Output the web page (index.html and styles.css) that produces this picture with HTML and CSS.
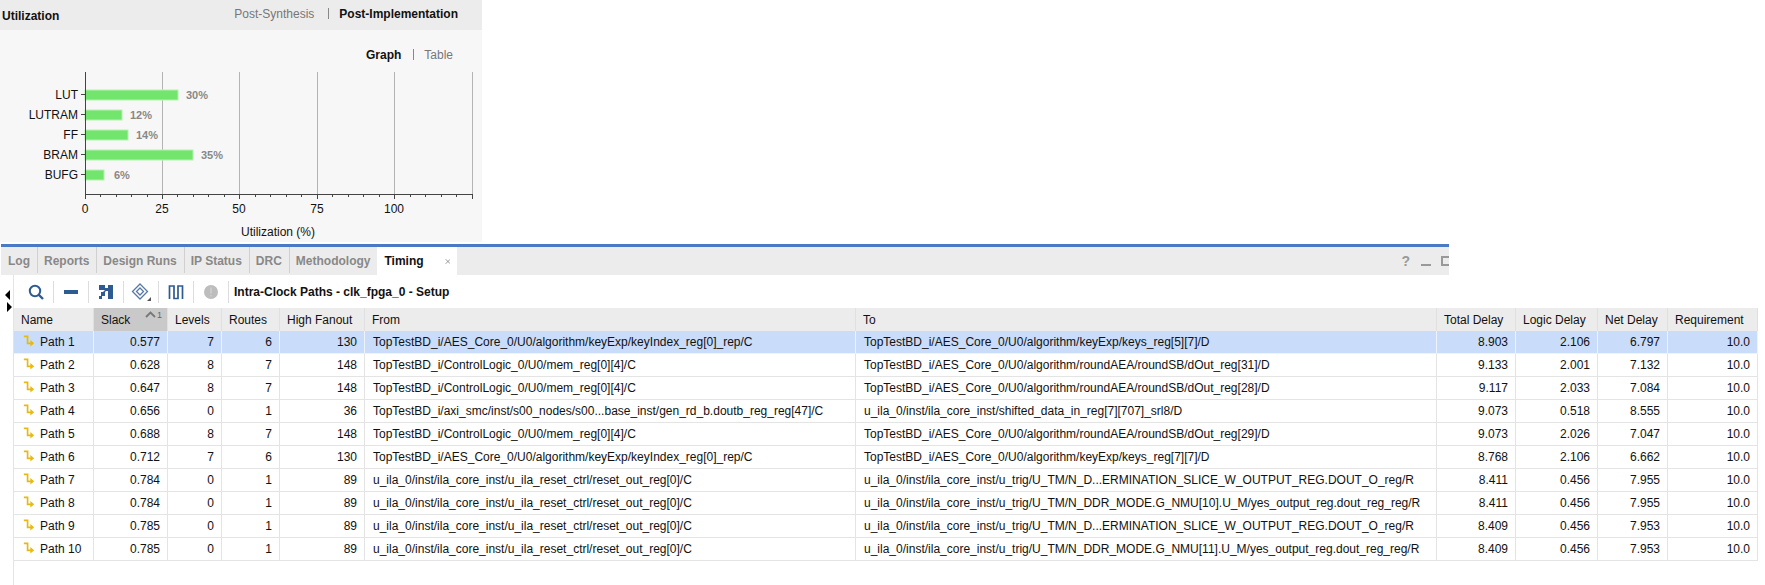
FILE: index.html
```html
<!DOCTYPE html>
<html lang="en">
<head>
<meta charset="utf-8">
<title>Timing</title>
<link rel="stylesheet" href="styles.css">
</head>
<body>
<svg class="defs" width="0" height="0"><symbol id="path-ic" viewBox="0 0 14 14"><path d="M2 1.5h4v7.5h6" fill="none" stroke="#e8b90e" stroke-width="1.8"/><path d="M9 5.5l4 3.5-4 3.5z" fill="#e8b90e"/></symbol></svg>
<section class="util">
  <header class="util-head">
    <h2 class="util-title">Utilization</h2>
    <nav class="switch switch-top"><span class="off">Post-Synthesis</span><i class="bar"></i><b>Post-Implementation</b></nav>
  </header>
  <div class="util-body">
    <nav class="switch switch-sub"><b>Graph</b><i class="bar"></i><span class="off">Table</span></nav>
    <svg class="chart" width="482" height="180" viewBox="0 0 482 180">
      <g class="grid">
        <path d="M162.5 6v122M239.5 6v122M317.5 6v122M394.5 6v122M472.5 6v122"/>
      </g>
      <g class="bars">
        <rect x="85" y="24" width="93" height="10"/>
        <rect x="85" y="44" width="37" height="10"/>
        <rect x="85" y="64" width="43" height="10"/>
        <rect x="85" y="84" width="108" height="10"/>
        <rect x="85" y="104" width="19" height="10"/>
      </g>
      <path class="axis" d="M85.500 6V128M85 128.500H473M85.500 128v5M162.500 128v5M239.500 128v5M317.500 128v5M394.500 128v5M472.500 128v5M81 28.500h4M81 48.500h4M81 68.500h4M81 88.500h4M81 108.500h4"/>
      <path class="axis minor" d="M100.500 128v3M116.500 128v3M131.500 128v3M147.500 128v3M177.500 128v3M193.500 128v3M208.500 128v3M224.500 128v3M255.500 128v3M270.500 128v3M286.500 128v3M301.500 128v3M332.500 128v3M348.500 128v3M363.500 128v3M379.500 128v3M410.500 128v3M425.500 128v3M441.500 128v3M456.500 128v3"/>
      <g class="cat">
        <text x="78" y="33">LUT</text><text x="78" y="53">LUTRAM</text><text x="78" y="73">FF</text><text x="78" y="93">BRAM</text><text x="78" y="113">BUFG</text>
      </g>
      <g class="pct">
        <text x="186" y="33">30%</text><text x="130" y="53">12%</text><text x="136" y="73">14%</text><text x="201" y="93">35%</text><text x="114" y="113">6%</text>
      </g>
      <g class="tick">
        <text x="85" y="147">0</text><text x="162" y="147">25</text><text x="239" y="147">50</text><text x="317" y="147">75</text><text x="394" y="147">100</text>
      </g>
      <text class="tick" x="278" y="170">Utilization (%)</text>
    </svg>
  </div>
</section>

<section class="timing">
  <div class="tabs">
    <span class="tab">Log</span><span class="tab">Reports</span><span class="tab">Design Runs</span><span class="tab">IP Status</span><span class="tab">DRC</span><span class="tab">Methodology</span>
    <span class="tab active">Timing<svg class="close" width="9" height="9" viewBox="0 0 9 9"><path d="M1 1l7 7M8 1l-7 7"/></svg></span>
    <div class="win"><span class="help">?</span><i class="min"></i><i class="max"></i></div>
  </div>
  <div class="work">
    <div class="rail">
      <svg width="8" height="36" viewBox="0 0 8 36"><path d="M6 9v10L1 14zM3 21l5 5-5 5z" fill="#000"/></svg>
    </div>
    <div class="main">
      <div class="toolbar">
        <button class="tb"><svg width="18" height="18" viewBox="0 0 18 18"><circle cx="8" cy="8" r="5.200" fill="none" stroke="#2f5b93" stroke-width="2"/><path d="M11.500 11.500l4.500 4.500" stroke="#2f5b93" stroke-width="2.400"/></svg></button>
        <button class="tb"><svg width="16" height="18" viewBox="0 0 16 18"><rect x="1" y="7" width="14" height="4" fill="#2f5b93"/></svg></button>
        <button class="tb"><svg width="16" height="18" viewBox="0 0 16 18"><path d="M1 2h6v3h3V2h5v14h-5V8H8l-1 1v4H4v3H1v-3h2V9h2l2-2H1z" fill="#2f5b93"/></svg></button>
        <button class="tb"><svg width="22" height="20" viewBox="0 0 22 20"><path d="M10 2l7.500 7.500L10 17l-7.500-7.500z" fill="none" stroke="#5578a8" stroke-width="1.300"/><path d="M10 6l3.500 3.500L10 13 6.500 9.500z" fill="none" stroke="#5578a8" stroke-width="1.300"/><path d="M21 15v4h-4z" fill="#555"/></svg></button>
        <button class="tb"><svg width="16" height="18" viewBox="0 0 16 18"><path d="M1.500 16V3h4.500v12.500h4V3h4.500v13" fill="none" stroke="#2f5b93" stroke-width="1.700"/></svg></button>
        <button class="tb"><svg width="16" height="16" viewBox="0 0 16 16"><circle cx="8" cy="8" r="7" fill="#bdbdbd"/><path d="M8 3.500v6M8 11v1.500" stroke="#cfcfcf" stroke-width="1.600"/></svg></button>
        <h3 class="tb-title">Intra-Clock Paths - clk_fpga_0 - Setup</h3>
      </div>
      <table class="paths">
        <colgroup><col class="c1"><col class="c2"><col class="c3"><col class="c4"><col class="c5"><col class="c6"><col class="c7"><col class="c8"><col class="c9"><col class="c10"><col class="c11"></colgroup>
        <thead><tr><th>Name</th><th class="sorted">Slack<span class="sort"><svg width="11" height="7" viewBox="0 0 11 7"><path d="M1 6l4.500-4.500L10 6" fill="none" stroke="#777" stroke-width="1.800"/></svg><sup>1</sup></span></th><th>Levels</th><th>Routes</th><th>High Fanout</th><th>From</th><th>To</th><th>Total Delay</th><th>Logic Delay</th><th>Net Delay</th><th>Requirement</th></tr></thead>
        <tbody>
<tr class="sel"><td class="nm"><svg class="pi"><use href="#path-ic"/></svg>Path 1</td><td class="n">0.577</td><td class="n">7</td><td class="n">6</td><td class="n">130</td><td>TopTestBD_i/AES_Core_0/U0/algorithm/keyExp/keyIndex_reg[0]_rep/C</td><td>TopTestBD_i/AES_Core_0/U0/algorithm/keyExp/keys_reg[5][7]/D</td><td class="n">8.903</td><td class="n">2.106</td><td class="n">6.797</td><td class="n">10.0</td></tr>
<tr><td class="nm"><svg class="pi"><use href="#path-ic"/></svg>Path 2</td><td class="n">0.628</td><td class="n">8</td><td class="n">7</td><td class="n">148</td><td>TopTestBD_i/ControlLogic_0/U0/mem_reg[0][4]/C</td><td>TopTestBD_i/AES_Core_0/U0/algorithm/roundAEA/roundSB/dOut_reg[31]/D</td><td class="n">9.133</td><td class="n">2.001</td><td class="n">7.132</td><td class="n">10.0</td></tr>
<tr><td class="nm"><svg class="pi"><use href="#path-ic"/></svg>Path 3</td><td class="n">0.647</td><td class="n">8</td><td class="n">7</td><td class="n">148</td><td>TopTestBD_i/ControlLogic_0/U0/mem_reg[0][4]/C</td><td>TopTestBD_i/AES_Core_0/U0/algorithm/roundAEA/roundSB/dOut_reg[28]/D</td><td class="n">9.117</td><td class="n">2.033</td><td class="n">7.084</td><td class="n">10.0</td></tr>
<tr><td class="nm"><svg class="pi"><use href="#path-ic"/></svg>Path 4</td><td class="n">0.656</td><td class="n">0</td><td class="n">1</td><td class="n">36</td><td>TopTestBD_i/axi_smc/inst/s00_nodes/s00...base_inst/gen_rd_b.doutb_reg_reg[47]/C</td><td>u_ila_0/inst/ila_core_inst/shifted_data_in_reg[7][707]_srl8/D</td><td class="n">9.073</td><td class="n">0.518</td><td class="n">8.555</td><td class="n">10.0</td></tr>
<tr><td class="nm"><svg class="pi"><use href="#path-ic"/></svg>Path 5</td><td class="n">0.688</td><td class="n">8</td><td class="n">7</td><td class="n">148</td><td>TopTestBD_i/ControlLogic_0/U0/mem_reg[0][4]/C</td><td>TopTestBD_i/AES_Core_0/U0/algorithm/roundAEA/roundSB/dOut_reg[29]/D</td><td class="n">9.073</td><td class="n">2.026</td><td class="n">7.047</td><td class="n">10.0</td></tr>
<tr><td class="nm"><svg class="pi"><use href="#path-ic"/></svg>Path 6</td><td class="n">0.712</td><td class="n">7</td><td class="n">6</td><td class="n">130</td><td>TopTestBD_i/AES_Core_0/U0/algorithm/keyExp/keyIndex_reg[0]_rep/C</td><td>TopTestBD_i/AES_Core_0/U0/algorithm/keyExp/keys_reg[7][7]/D</td><td class="n">8.768</td><td class="n">2.106</td><td class="n">6.662</td><td class="n">10.0</td></tr>
<tr><td class="nm"><svg class="pi"><use href="#path-ic"/></svg>Path 7</td><td class="n">0.784</td><td class="n">0</td><td class="n">1</td><td class="n">89</td><td>u_ila_0/inst/ila_core_inst/u_ila_reset_ctrl/reset_out_reg[0]/C</td><td>u_ila_0/inst/ila_core_inst/u_trig/U_TM/N_D...ERMINATION_SLICE_W_OUTPUT_REG.DOUT_O_reg/R</td><td class="n">8.411</td><td class="n">0.456</td><td class="n">7.955</td><td class="n">10.0</td></tr>
<tr><td class="nm"><svg class="pi"><use href="#path-ic"/></svg>Path 8</td><td class="n">0.784</td><td class="n">0</td><td class="n">1</td><td class="n">89</td><td>u_ila_0/inst/ila_core_inst/u_ila_reset_ctrl/reset_out_reg[0]/C</td><td>u_ila_0/inst/ila_core_inst/u_trig/U_TM/N_DDR_MODE.G_NMU[10].U_M/yes_output_reg.dout_reg_reg/R</td><td class="n">8.411</td><td class="n">0.456</td><td class="n">7.955</td><td class="n">10.0</td></tr>
<tr><td class="nm"><svg class="pi"><use href="#path-ic"/></svg>Path 9</td><td class="n">0.785</td><td class="n">0</td><td class="n">1</td><td class="n">89</td><td>u_ila_0/inst/ila_core_inst/u_ila_reset_ctrl/reset_out_reg[0]/C</td><td>u_ila_0/inst/ila_core_inst/u_trig/U_TM/N_D...ERMINATION_SLICE_W_OUTPUT_REG.DOUT_O_reg/R</td><td class="n">8.409</td><td class="n">0.456</td><td class="n">7.953</td><td class="n">10.0</td></tr>
<tr><td class="nm"><svg class="pi"><use href="#path-ic"/></svg>Path 10</td><td class="n">0.785</td><td class="n">0</td><td class="n">1</td><td class="n">89</td><td>u_ila_0/inst/ila_core_inst/u_ila_reset_ctrl/reset_out_reg[0]/C</td><td>u_ila_0/inst/ila_core_inst/u_trig/U_TM/N_DDR_MODE.G_NMU[11].U_M/yes_output_reg.dout_reg_reg/R</td><td class="n">8.409</td><td class="n">0.456</td><td class="n">7.953</td><td class="n">10.0</td></tr>
        </tbody>
      </table>
    </div>
  </div>
</section>
</body>
</html>
```
FILE: styles.css
```css
* { box-sizing: border-box; }
html, body { margin: 0; padding: 0; background: #fff; overflow: hidden; }
body { width: 1765px; height: 585px; font: 12px "Liberation Sans", Arial, sans-serif; color: #111; }
.defs { display: block; height: 0; }

.util { width: 482px; height: 242px; background: #f7f7f7; }
.util-head { height: 30px; background: #ececec; display: flex; align-items: center; justify-content: space-between; padding: 0 24px 0 2px; }
.util-title { margin: 2px 0 0; font-size: 12px; font-weight: bold; }
.switch { display: flex; align-items: center; }
.switch .off { color: #777; }
.switch b { color: #111; }
.bar { width: 1px; height: 11px; background: #888; margin: 0 10px 0 14px; }
.switch-top { margin-top: -3px; }
.util-body { position: relative; }
.switch-sub { justify-content: flex-end; padding: 13px 29px 0 0; height: 36px; }
.switch-sub .bar { margin: 0 10px 0 12px; }
.chart { display: block; }
.grid path { stroke: #b4b4b4; fill: none; }
.bars rect { fill: #72e66c; stroke: #b5f0b0; stroke-width: 1; }
.axis { stroke: #444; fill: none; }
.cat text { text-anchor: end; font-size: 12px; fill: #111; }
.pct text { font-size: 11px; font-weight: bold; fill: #888; }
.tick, .tick text { text-anchor: middle; font-size: 12px; fill: #111; }

.timing { margin: 2px 0 0 1px; }
.tabs { width: 1448px; height: 31px; border-top: 3px solid #4a7ac4; background: #ececec; display: flex; overflow: hidden; }
.tab { display: flex; align-items: center; padding: 0 7px; font-weight: bold; color: #888; position: relative; }
.tab + .tab::before { content: ""; position: absolute; left: 0; top: 0; bottom: 2px; width: 1px; background: #d0d0d0; }
.tab.active { background: #fff; color: #111; width: 80px; }
.tab.active::before { display: none; }
.close { margin-left: 21px; }
.close path { stroke: #888; stroke-width: 1.300; fill: none; }
.win { margin-left: auto; display: flex; align-items: center; }
.help { font-weight: bold; font-size: 14px; color: #999; }
.min { width: 10px; height: 2px; background: #999; margin: 8px 0 0 11px; }
.max { width: 8px; height: 10px; border: 2px solid #999; border-right: 0; margin-left: 10px; }

.work { display: flex; }
.rail { width: 13px; height: 310px; border-right: 1px solid #e4e4e4; padding: 6px 0 0 3px; flex: none; }
.rail svg { display: block; }
.main { flex: none; width: 1744px; }
.toolbar { height: 33px; display: flex; align-items: center; padding-left: 5px; }
.tb { width: 35px; height: 22px; padding: 0; border: 0; background: none; border-right: 1px solid #ddd; display: flex; align-items: center; justify-content: center; }
.tb-title { margin: 0 0 0 5px; font-size: 12px; font-weight: bold; }

.paths { border-collapse: separate; border-spacing: 0; table-layout: fixed; width: 1744px; }
.c1 { width: 80px; } .c2 { width: 74px; } .c3 { width: 54px; } .c4 { width: 58px; } .c5 { width: 85px; }
.c6 { width: 491px; } .c7 { width: 581px; } .c8 { width: 79px; } .c9 { width: 82px; } .c10 { width: 70px; } .c11 { width: 90px; }
.paths th { height: 23px; background: #ececec; font-weight: normal; text-align: left; padding: 0 0 0 7px; border-right: 1px solid #e0e0e0; position: relative; white-space: nowrap; }
.paths th.sorted { background: #c9c9c9; }
.sort { position: absolute; right: 5px; top: 3px; display: flex; color: #666; font-size: 9px; }
.sort sup { font-size: 9px; line-height: 8px; margin-left: 1px; }
.paths td { height: 23px; padding: 0 0 0 8px; border-right: 1px solid #e4e4e4; border-bottom: 1px solid #e4e4e4; white-space: nowrap; overflow: hidden; }
.paths td.n { text-align: right; padding: 0 7px 0 0; }
.paths td.nm { padding-left: 8px; }
.sel td { background: #c9dcfa; border-color: #eef3fb; }
.pi { width: 13px; height: 13px; margin-right: 5px; vertical-align: -2px; }
```
